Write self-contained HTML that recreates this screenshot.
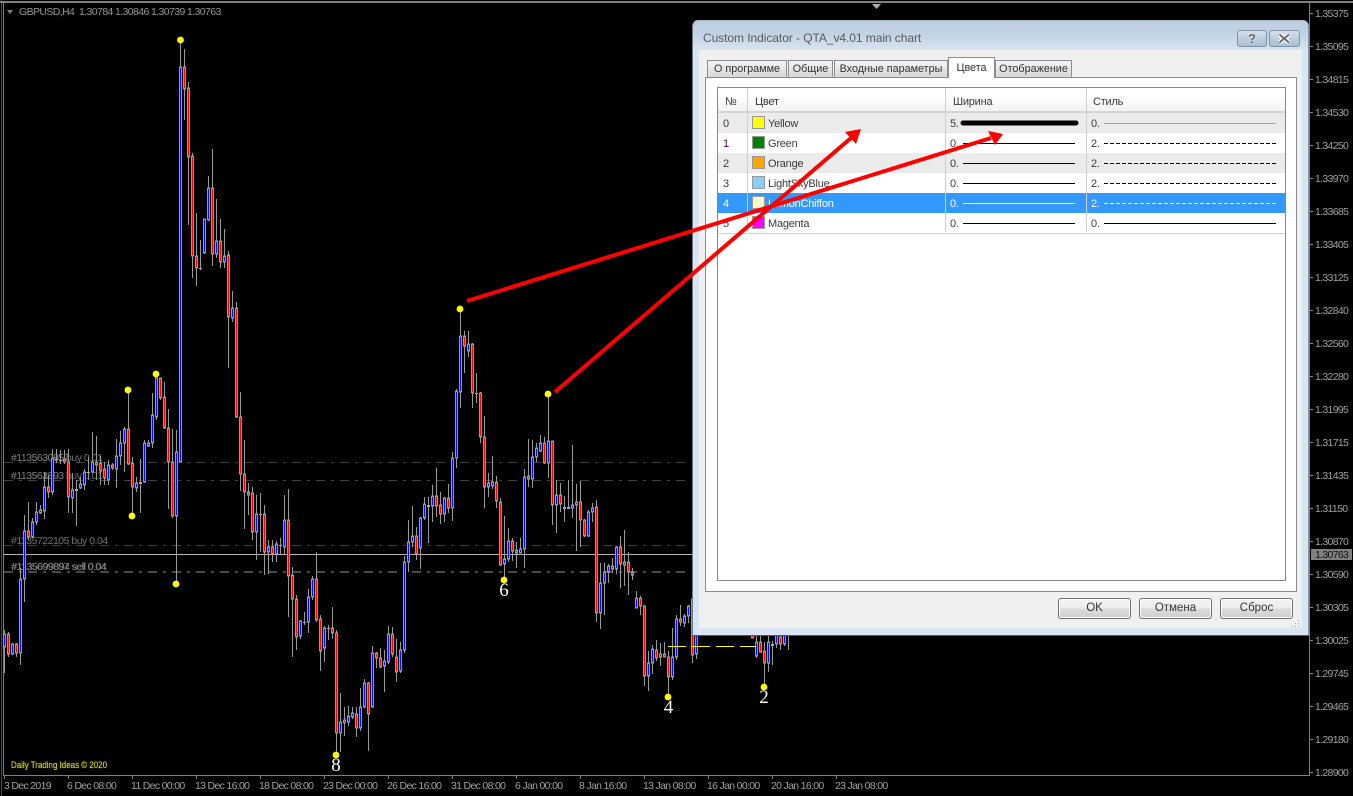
<!DOCTYPE html>
<html><head><meta charset="utf-8"><title>Custom Indicator</title>
<style>
html,body{margin:0;padding:0;background:#000;width:1353px;height:796px;overflow:hidden}
body{position:relative;font-family:"Liberation Sans",sans-serif}
.a{position:absolute;box-sizing:border-box}
.t{position:absolute;white-space:pre;font-size:11px;letter-spacing:-.22px;line-height:20px;height:20px;color:#3a3a3a}
.tab{position:absolute;box-sizing:border-box;top:60px;height:17px;background:linear-gradient(#f6f6f6,#e4e4e4 50%,#d8d8d8);border:1px solid #8a8d94;border-bottom:0;font-size:10.8px;line-height:17px;text-align:center;color:#333;white-space:pre}
.row{position:absolute;left:718px;width:567px;height:20px;border-bottom:1px solid #d0d0d0}
.btn{position:absolute;box-sizing:border-box;top:598px;width:73px;height:21px;border:1px solid #707070;border-radius:3px;background:linear-gradient(#f4f4f4,#ececec 48%,#dcdcdc 52%,#cfcfcf);font-size:11.5px;line-height:19px;text-align:center;color:#333;box-shadow:inset 0 0 0 1px #fbfbfb}
svg text{font-family:"Liberation Sans",sans-serif}
</style></head><body>

<svg class="a" style="left:0;top:0" width="1353" height="796" viewBox="0 0 1353 796">
<defs>
<path id="b" d="M4 635V646M12 645V653M20 580V652M24 532V578M32 523V536M36 513V521M40 511V512M44 488V510M52 459V491M72 491V497M80 485V487M84 473V484M92 463V471M108 466V479M116 457V468M120 444V455M124 430V442M136 484V487M144 444V481M148 444V445M152 416V442M156 379V416M176 453V515M180 68V461M204 220V252M208 189V219M216 242V253M224 257V261M232 309V317M256 515V531M268 548V551M276 545V553M284 521V546M300 622V635M308 598V621M312 580V596M324 629V647M340 723V732M344 721V722M348 717V721M352 714V716M360 708V727M364 684V706M372 654V706M384 662V665M388 635V661M400 651V670M404 563V649M408 543V561M412 537V541M420 519V547M424 505V517M432 497V505M444 499V513M452 459V507M456 392V457M460 337V391M468 345V350M488 484V486M492 483V485M504 560V563M508 542V558M520 550V552M524 478V548M532 458V478M536 449V456M540 444V450M548 442V462M556 496V504M572 506V507M576 503V504M588 513V535M592 509V511M600 584V612M604 573V582M608 567V571M616 548V568M624 563V564M636 599V607M648 664V675M652 650V662M660 655V656M672 658V676M676 620V656M684 617V622M688 607V615M696 600V653M756 643V655M768 643V662M776 636V643M784 636V643"/>
<path id="r" d="M8 635V653M16 645V652M28 532V536M48 488V491M64 460V461M68 463V496M96 463V464M100 464V470M104 470V477M112 466V467M128 430V463M132 464V486M160 379V397M164 398V427M168 429V461M172 463V515M184 68V88M188 89V156M192 157V255M196 257V267M212 189V253M220 242V261M228 256V316M236 309V416M240 418V473M244 475V491M248 493V494M252 494V531M264 515V551M272 548V553M288 521V575M292 576V598M296 600V636M316 580V619M320 620V650M332 629V632M336 634V732M356 715V727M368 684V713M376 654V657M380 659V666M392 635V653M396 658V671M416 537V553M436 497V505M440 506V513M448 499V507M464 337V345M472 345V392M480 394V436M484 438V486M496 483V500M500 503V564M512 542V550M516 551V552M528 477V478M544 444V462M552 442V504M560 496V503M580 503V519M584 521V535M596 508V612M612 567V568M620 548V563M628 563V571M632 573V574M640 599V605M644 607V675M656 651V657M664 655V656M668 658V676M680 620V621M692 600V654M752 636V637M760 643V651M764 652V662M780 638V643"/>
</defs>

<!-- frame -->
<g shape-rendering="crispEdges" fill="#808080">
<rect x="1" y="0" width="1" height="796" fill="#4a4a4a"/>
<rect x="0" y="1" width="1353" height="2"/>
<rect x="3" y="3" width="1" height="773"/>
<rect x="3" y="775" width="1307" height="1"/>
<rect x="1309" y="3" width="1" height="773"/>
</g>
<polygon points="872,4 881,4 876.5,9" fill="#aaa"/>
<polygon points="7,10 13,10 10,14" fill="#808080"/>

<!-- trade level lines -->
<g shape-rendering="crispEdges" fill="none">
<path d="M4 462.5H686M4 480.5H686M4 545.5H686" stroke="#404040" stroke-dasharray="9 6 3 6"/>
<path d="M4 572H686" stroke="#484848" stroke-width="2" stroke-dasharray="9 6 3 6"/>
</g>

<!-- trade labels -->
<g font-size="10.5" fill="#707070" letter-spacing="-.5">
<text x="11" y="461">#113563085 buy 0.01</text><text x="11" y="461">#1135630957</text>
<text x="11" y="479">#113561893 buy 0.01</text><text x="11" y="479">#113563393 b</text>
<text x="11" y="544">#1135722105 buy 0.04</text>
<text x="11" y="570" fill="#7c7c7c">#1135699897 sell 0.04</text><text x="11.5" y="570" fill="#7c7c7c">#1135699894 sell 0.04</text>
</g>
<path d="M4 554.5H1309" stroke="#b4b4b4" shape-rendering="crispEdges"/>

<!-- candles -->
<g transform="translate(.5 0)" fill="none" shape-rendering="crispEdges">
<path stroke="#9a9a9a" d="M4 630V673M8 632V657M12 643V655M16 643V657M20 568V665M24 515V602M28 502V540M32 518V538M36 502V525M40 505V514M44 473V519M48 475V498M52 449V495M56 449V463M60 450V464M64 450V464M68 449V513M72 473V513M76 480V526M80 477V489M84 469V490M88 457V480M92 432V473M96 436V480M100 456V485M104 462V485M108 460V485M112 463V470M116 439V488M120 431V465M124 427V472M128 392V465M132 457V516M136 477V492M140 459V513M144 440V483M148 440V447M152 393V448M156 378V420M160 378V400M164 382V429M168 409V509M172 429V518M176 430V584M180 40V462M184 49V120M188 82V225M192 153V278M196 213V286M200 240V270M204 219V254M208 176V221M212 149V266M216 199V258M220 219V268M224 229V268M228 251V368M232 291V322M236 302V418M240 392V491M244 440V529M248 483V515M252 487V540M256 495V560M260 493V552M264 505V575M268 540V574M272 540V562M276 541V562M280 538V554M284 495V554M288 489V617M292 567V657M296 595V650M300 620V639M304 612V625M308 589V633M312 576V600M316 552V622M320 615V671M324 626V662M328 625V640M332 607V639M336 630V753M340 693V752M344 707V736M348 706V726M352 707V719M356 707V737M360 688V731M364 679V708M368 682V751M372 646V708M376 652V668M380 648V668M384 650V692M388 626V664M392 627V657M396 639V682M400 642V673M404 556V653M408 520V572M412 506V547M416 527V560M420 517V569M424 497V520M428 497V543M432 485V522M436 468V517M440 492V524M444 497V522M448 484V513M452 452V521M456 389V468M460 309V408M464 331V373M468 331V357M472 343V408M476 373V403M480 392V443M484 416V508M488 473V497M492 456V489M496 476V508M500 498V566M504 516V579M508 528V562M512 538V561M516 542V568M520 538V552M524 469V568M528 439V487M532 440V488M536 443V462M540 435V452M544 437V464M548 394V478M552 441V525M556 480V533M560 483V512M564 496V522M568 480V508M572 445V518M576 484V551M580 481V547M584 519V537M588 510V537M592 503V522M596 500V622M600 563V629M604 563V615M608 564V583M612 558V573M616 546V574M620 536V588M624 530V586M628 552V595M632 568V580M636 591V608M640 596V615M644 605V686M648 651V691M652 645V674M656 640V661M660 643V666M664 642V657M668 651V695M672 628V680M676 615V660M680 605V626M684 614V627M688 605V623M692 600V663M696 600V659M752 630V638M756 636V658M760 636V653M764 642V687M768 636V672M772 641V665M776 630V648M780 630V650M784 630V646M788 630V650"/>
<use href="#b" stroke="#9a9a9a" stroke-width="3" stroke-linecap="square"/>
<use href="#r" stroke="#9a9a9a" stroke-width="3" stroke-linecap="square"/>
<path stroke="#a8a8a8" stroke-width="3" d="M56 459v1M60 460v1M76 489v2M88 472v1M140 482v2M200 268v1M260 514v1M280 545v1M304 622v1M328 628v1M428 505v2M476 393v1M564 507v2M568 507v2M772 644v2"/>
<use href="#b" stroke="#0808ff"/>
<use href="#r" stroke="#ff0000"/>
</g>

<!-- yellow dashed -->
<path d="M668 646.5H756" stroke="#ffff00" stroke-dasharray="18 6" shape-rendering="crispEdges"/>

<!-- dots -->
<g fill="#ffff00">
<circle cx="180.5" cy="40" r="3.4"/><circle cx="128" cy="390" r="3.4"/><circle cx="156" cy="374" r="3.4"/><circle cx="132" cy="516" r="3.4"/><circle cx="176" cy="584" r="3.4"/><circle cx="460" cy="309" r="3.4"/><circle cx="548" cy="394" r="3.4"/><circle cx="504" cy="580" r="3.4"/><circle cx="336" cy="755" r="3.4"/><circle cx="668" cy="697" r="3.4"/><circle cx="764" cy="687" r="3.4"/>
</g>

<!-- wave numbers -->
<g fill="#fff" font-size="19" text-anchor="middle" style="font-family:'Liberation Serif',serif">
<text x="336" y="771" style="font-family:'Liberation Serif',serif">8</text>
<text x="504" y="596" style="font-family:'Liberation Serif',serif">6</text>
<text x="668.5" y="713" style="font-family:'Liberation Serif',serif">4</text>
<text x="764" y="703" style="font-family:'Liberation Serif',serif">2</text>
</g>

<text x="11" y="768" font-size="9.5" fill="#dede00" stroke="#c8c800" stroke-width=".2" textLength="96" lengthAdjust="spacingAndGlyphs">Daily Trading Ideas © 2020</text>

<!-- header -->
<g font-size="10.5" fill="#959595" letter-spacing="-.6">
<text x="19" y="15">GBPUSD,H4</text><text x="79" y="15">1.30784</text><text x="115" y="15">1.30846</text><text x="151" y="15">1.30739</text><text x="187" y="15">1.30763</text>
</g>

<!-- price axis -->
<g fill="#808080" shape-rendering="crispEdges">
<path d="M1310 13.5h3M1310 46.5h3M1310 79.5h3M1310 112.5h3M1310 145.5h3M1310 178.5h3M1310 211.5h3M1310 244.5h3M1310 277.5h3M1310 310.5h3M1310 343.5h3M1310 376.5h3M1310 409.5h3M1310 442.5h3M1310 475.5h3M1310 508.5h3M1310 541.5h3M1310 574.5h3M1310 607.5h3M1310 640.5h3M1310 673.5h3M1310 706.5h3M1310 739.5h3M1310 772.5h3M4.5 776v3M68.5 776v3M132.5 776v3M196.5 776v3M260.5 776v3M324.5 776v3M388.5 776v3M452.5 776v3M516.5 776v3M580.5 776v3M644.5 776v3M708.5 776v3M772.5 776v3M836.5 776v3" stroke="#808080" fill="none"/>
<rect x="1311" y="549" width="41" height="11" fill="#808080"/>
</g>
<g font-size="10.5" fill="#a0a0a0" letter-spacing="-.68">
<text x="1315" y="17">1.35375</text><text x="1315" y="50">1.35095</text><text x="1315" y="83">1.34815</text><text x="1315" y="116">1.34530</text><text x="1315" y="149">1.34250</text><text x="1315" y="182">1.33970</text><text x="1315" y="215">1.33685</text><text x="1315" y="248">1.33405</text><text x="1315" y="281">1.33125</text><text x="1315" y="314">1.32840</text><text x="1315" y="347">1.32560</text><text x="1315" y="380">1.32280</text><text x="1315" y="413">1.31995</text><text x="1315" y="446">1.31715</text><text x="1315" y="479">1.31435</text><text x="1315" y="512">1.31150</text><text x="1315" y="545">1.30870</text><text x="1315" y="558" fill="#111">1.30763</text><text x="1315" y="578">1.30590</text><text x="1315" y="611">1.30305</text><text x="1315" y="644">1.30025</text><text x="1315" y="677">1.29745</text><text x="1315" y="710">1.29465</text><text x="1315" y="743">1.29180</text><text x="1315" y="776">1.28900</text>
<text x="4" y="789">3 Dec 2019</text><text x="67" y="789">6 Dec 08:00</text><text x="131" y="789">11 Dec 00:00</text><text x="195" y="789">13 Dec 16:00</text><text x="259" y="789">18 Dec 08:00</text><text x="323" y="789">23 Dec 00:00</text><text x="387" y="789">26 Dec 16:00</text><text x="451" y="789">31 Dec 08:00</text><text x="515" y="789">6 Jan 00:00</text><text x="579" y="789">8 Jan 16:00</text><text x="643" y="789">13 Jan 08:00</text><text x="707" y="789">16 Jan 00:00</text><text x="771" y="789">20 Jan 16:00</text><text x="835" y="789">23 Jan 08:00</text>
</g>
</svg>

<!-- dialog -->
<div class="a" style="left:692px;top:20px;width:617px;height:616px;border:1px solid #6a7480;border-color:#a9b7c4 #8796a6 #55585c #6f7780;border-radius:6px 6px 0 0;background:linear-gradient(#bccfe0 0,#c2d3e3 14px,#d9e5f2 30px,#d9e5f2 100%)"></div>
<div class="a" style="left:699px;top:50px;width:603px;height:578px;background:#f0f0f0"></div>
<div class="t" style="left:703px;top:28px;font-size:12px;letter-spacing:-.06px;color:#5a5a5a">Custom Indicator - QTA_v4.01 main chart</div>

<div class="a" style="left:1237px;top:30px;width:30px;height:17px;border:1px solid #7f93a9;border-radius:3px;background:linear-gradient(#d4e0ec,#bccde0 50%,#aebfd3);font:bold 13px/15px 'Liberation Sans',sans-serif;color:#666;text-align:center;text-shadow:0 0 2px #fff">?</div>
<div class="a" style="left:1269px;top:30px;width:31px;height:17px;border:1px solid #7f93a9;border-radius:3px;background:linear-gradient(#d4e0ec,#bccde0 50%,#aebfd3)"></div>
<svg class="a" style="left:1269px;top:30px" width="31" height="17"><path d="M10.500 4.500L20 12.500M20 4.500L10.500 12.500" stroke="#fff" stroke-width="4.500"/><path d="M10.500 4.500L20 12.500M20 4.500L10.500 12.500" stroke="#6c6c6c" stroke-width="2"/></svg>

<!-- tab panel -->
<div class="a" style="left:705px;top:77px;width:592px;height:515px;background:#fff;border:1px solid #898c95"></div>
<div class="tab" style="left:707px;width:80px">О программе</div>
<div class="tab" style="left:788px;width:45px">Общие</div>
<div class="tab" style="left:834px;width:114px">Входные параметры</div>
<div class="tab" style="left:995px;width:77px">Отображение</div>
<div class="tab" style="left:948px;top:57px;width:47px;height:21px;background:#fff;line-height:20px;z-index:2">Цвета</div>

<!-- list -->
<div class="a" style="left:717px;top:87px;width:569px;height:494px;background:#fff;border:1px solid #828790"></div>
<div class="a" style="left:718px;top:88px;width:567px;height:25px;background:linear-gradient(#fff 30%,#f1f2f4);border-bottom:2px solid #d5d5d5"></div>
<div class="t" style="left:725px;top:92px">№</div>
<div class="t" style="left:755px;top:92px">Цвет</div>
<div class="t" style="left:953px;top:92px">Ширина</div>
<div class="t" style="left:1093px;top:92px">Стиль</div>

<div class="row" style="top:113px;background:#ebebeb"></div>
<div class="row" style="top:133px;background:#fff"></div>
<div class="row" style="top:153px;background:#ebebeb"></div>
<div class="row" style="top:173px;background:#fff"></div>
<div class="row" style="top:193px;background:#3399ff"></div>
<div class="row" style="top:213px;background:#fff"></div>

<svg class="a" style="left:0;top:0;pointer-events:none" width="1353" height="796" shape-rendering="crispEdges">
<path d="M747.500 88V232M945.500 88V232M1086.500 88V232" stroke="#cfcfcf" fill="none"/>
<g stroke="#999">
<rect x="752.500" y="116.500" width="12" height="12" fill="#ffff00"/>
<rect x="752.500" y="136.500" width="12" height="12" fill="#008000"/>
<rect x="752.500" y="156.500" width="12" height="12" fill="#ffa500"/>
<rect x="752.500" y="176.500" width="12" height="12" fill="#87cefa"/>
<rect x="752.500" y="196.500" width="12" height="12" fill="#fffacd"/>
<rect x="752.500" y="216.500" width="12" height="12" fill="#ff00ff"/>
</g>
<path d="M963 123H1076" stroke="#000" stroke-width="5" stroke-linecap="round" shape-rendering="auto"/>
<path d="M963 143.500H1075M963 163.500H1075M963 183.500H1075M963 223.500H1075M1104 223.500H1276" stroke="#000" fill="none"/>
<path d="M963 203.500H1075" stroke="#fff" fill="none"/>
<path d="M1104 123.500H1276" stroke="#a0a0a0" fill="none"/>
<path d="M1104 143.500H1276M1104 163.500H1276M1104 183.500H1276" stroke="#000" stroke-dasharray="4 2" fill="none"/>
<path d="M1104 203.500H1276" stroke="#fff" stroke-dasharray="4 2" fill="none"/>
</svg>

<div class="t" style="left:723px;top:114px">0</div><div class="t" style="left:768px;top:114px">Yellow</div><div class="t" style="left:950px;top:114px">5.</div><div class="t" style="left:1091px;top:114px">0.</div>
<div class="t" style="left:723px;top:134px;color:#500050">1</div><div class="t" style="left:768px;top:134px">Green</div><div class="t" style="left:950px;top:134px">0.</div><div class="t" style="left:1091px;top:134px">2.</div>
<div class="t" style="left:723px;top:154px">2</div><div class="t" style="left:768px;top:154px">Orange</div><div class="t" style="left:950px;top:154px">0.</div><div class="t" style="left:1091px;top:154px">2.</div>
<div class="t" style="left:723px;top:174px">3</div><div class="t" style="left:768px;top:174px">LightSkyBlue</div><div class="t" style="left:950px;top:174px">0.</div><div class="t" style="left:1091px;top:174px">2.</div>
<div class="t" style="left:723px;top:194px;color:#fff">4</div><div class="t" style="left:768px;top:194px;color:#fff">LemonChiffon</div><div class="t" style="left:950px;top:194px;color:#fff">0.</div><div class="t" style="left:1091px;top:194px;color:#fff">2.</div>
<div class="t" style="left:723px;top:214px">5</div><div class="t" style="left:768px;top:214px">Magenta</div><div class="t" style="left:950px;top:214px">0.</div><div class="t" style="left:1091px;top:214px">0.</div>

<div class="btn" style="left:1058px">OK</div>
<div class="btn" style="left:1139px">Отмена</div>
<div class="btn" style="left:1220px">Сброс</div>
<svg class="a" style="left:1290px;top:616px" width="12" height="12" shape-rendering="crispEdges"><path d="M8 4h1v1H8zM8 7h1v1H8zM5 7h1v1H5zM8 10h1v1H8zM5 10h1v1H5zM2 10h1v1H2z" fill="#a8a8a8"/></svg>

<!-- red arrows -->
<svg class="a" style="left:0;top:0;z-index:5;pointer-events:none" width="1353" height="796">
<path d="M467 301L991 138" stroke="#ff0000" stroke-width="4" fill="none"/>
<polygon points="1003,134 988,131 995,145" fill="#ff0000"/>
<path d="M555 392L851 138" stroke="#ff0000" stroke-width="4" fill="none"/>
<polygon points="861,129 845,132 856,144" fill="#ff0000"/>
</svg>
</body></html>
